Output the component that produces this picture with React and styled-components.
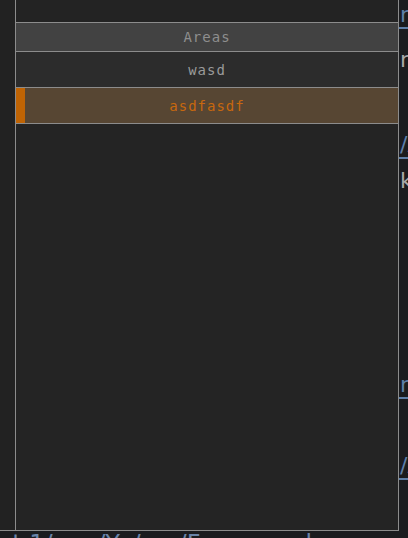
import React from 'react';
import styled, { createGlobalStyle } from 'styled-components';

const GlobalStyle = createGlobalStyle`
  html, body {
    margin: 0;
    padding: 0;
    background: #1c1c1e;
    overflow: hidden;
  }
`;

const LINE = '#8c8c8c';

const Screen = styled.div`
  width: 408px;
  height: 538px;
  display: flex;
  flex-direction: column;
  overflow: hidden;
`;

const Top = styled.div`
  display: flex;
  height: 531px;
`;

const Editor = styled.div`
  display: flex;
  width: 399px;
  border-bottom: 1px solid ${LINE};
  box-sizing: border-box;
`;

const Gutter = styled.div`
  width: 15px;
  background: #222222;
  border-right: 1px solid ${LINE};
`;

const Panel = styled.div`
  width: 382px;
  display: flex;
  flex-direction: column;
  background: #242424;
  border-right: 1px solid ${LINE};
`;

const TopSpace = styled.div`
  height: 22px;
  background: #232323;
  border-bottom: 1px solid ${LINE};
`;

const Row = styled.div`
  display: flex;
  height: ${p => p.h}px;
  background: ${p => p.bg};
  border-bottom: 1px solid ${LINE};
`;

const Marker = styled.div`
  width: 9px;
  background: #c06404;
`;

const Label = styled.div`
  flex: 1;
  display: flex;
  align-items: center;
  justify-content: center;
  padding-right: ${p => (p.shift ? 9 : 0)}px;
  font-family: "DejaVu Sans Mono", monospace;
  font-size: 14px;
  letter-spacing: 1px;
  color: ${p => p.color};
`;

const Side = styled.div`
  flex: 1;
  display: flex;
  flex-direction: column;
  overflow: hidden;
  background: #1b1c1f;
`;

const SideText = styled.div`
  margin-top: ${p => p.mt}px;
  padding-left: 1px;
  height: 22px;
  line-height: 22px;
  font-family: "DejaVu Sans", sans-serif;
  font-size: 22px;
  white-space: nowrap;
  color: ${p => (p.link ? '#5f7fa8' : '#a8a8a8')};
  border-bottom: ${p => (p.link ? '2px solid #5f7fa8' : 'none')};
  padding-bottom: ${p => (p.link ? 1 : 0)}px;
`;

const Bottom = styled.div`
  height: 7px;
  overflow: hidden;
  background: #1b1c1f;
`;

const BottomText = styled.div`
  margin-left: -3px;
  margin-top: 1px;
  font-family: "DejaVu Sans", sans-serif;
  font-size: 24px;
  line-height: 24px;
  white-space: nowrap;
  color: #6a84a8;
`;

const sideItems = [
  { text: 'rename', link: true, mt: 4 },
  { text: 'return', link: false, mt: 20 },
  { text: '/Assets', link: true, mt: 63 },
  { text: 'key', link: false, mt: 11 },
  { text: 'readme', link: true, mt: 182 },
  { text: '/Areas', link: true, mt: 56 },
];

export default function App() {
  return (
    <Screen>
      <GlobalStyle />
      <Top>
        <Editor>
          <Gutter />
          <Panel>
            <TopSpace />
            <Row h={28} bg="#424242">
              <Label color="#8e8e8e">Areas</Label>
            </Row>
            <Row h={35} bg="#2c2c2c">
              <Label color="#9a9a9a">wasd</Label>
            </Row>
            <Row h={35} bg="#574633">
              <Marker />
              <Label color="#c8680e" shift>asdfasdf</Label>
            </Row>
          </Panel>
        </Editor>
        <Side>
          {sideItems.map((it, i) => (
            <SideText key={i} link={it.link} mt={it.mt}>{it.text}</SideText>
          ))}
        </Side>
      </Top>
      <Bottom>
        <BottomText>nt 1/ano/Yu/om/Framework</BottomText>
      </Bottom>
    </Screen>
  );
}
